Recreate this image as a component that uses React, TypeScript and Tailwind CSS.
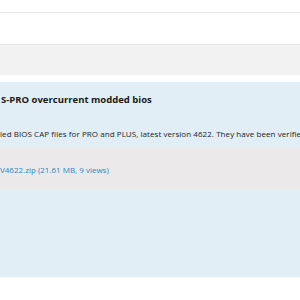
export default function App() {
  return (
    <div className="w-[300px] h-[300px] overflow-hidden bg-white" style={{ fontFamily: '"Open Sans", sans-serif' }}>
      <div className="h-[13px] border-b border-[#e9e9e9]" />
      <div className="h-[31px]" />
      <div className="h-[31px] bg-[#f2f2f2] border-t border-[#e6e6e6]" />
      <div className="h-[7px]" />
      <div className="h-[195px] bg-[#e1eef5] flex flex-col">
        <div className="h-[10px]" />
        <h3 className="pl-[1px] text-[9.5px] leading-[16px] font-bold text-[#1a1a1a] whitespace-nowrap">
          S-PRO overcurrent modded bios
        </h3>
        <div className="h-[20px]" />
        <p className="text-[8px] leading-[12px] tracking-[0.06px] font-medium text-[#222] whitespace-nowrap">
          led BIOS CAP files for PRO and PLUS, latest version 4622. They have been verified
        </p>
        <div className="h-[8px]" />
        <div className="h-[41px] bg-[#ebe9ea] flex items-center pt-[3px]">
          <a className="text-[8px] font-medium text-[#2a88c2] whitespace-nowrap">V4622.zip (21.61 MB, 9 views)</a>
        </div>
      </div>
    </div>
  );
}
